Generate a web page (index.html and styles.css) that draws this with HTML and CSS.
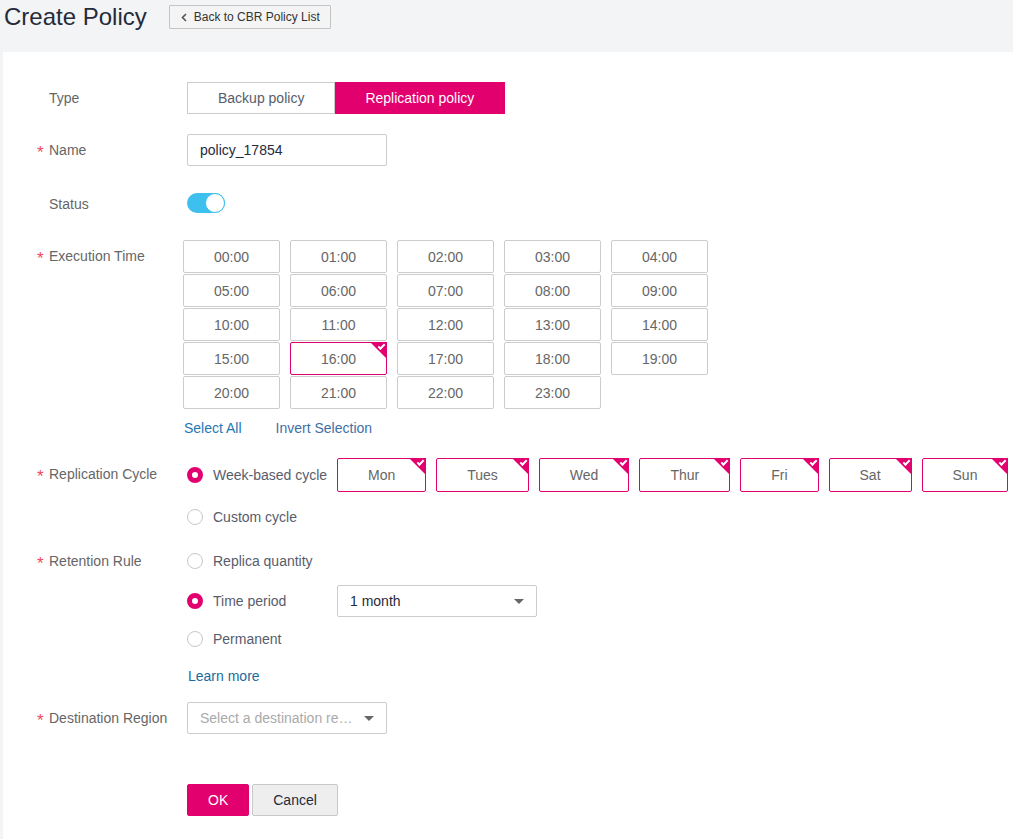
FILE: index.html
```html
<!DOCTYPE html>
<html lang="en">
<head>
<meta charset="utf-8">
<title>Create Policy</title>
<link rel="stylesheet" href="styles.css">
</head>
<body>
<div class="page-head">
  <h1 class="title">Create Policy</h1>
  <button class="back-btn" type="button">
    <svg class="back-icon" width="6" height="9" viewBox="0 0 6 9"><path d="M5 1 L1.5 4.5 L5 8" fill="none" stroke="#555" stroke-width="1.6"/></svg>
    Back to CBR Policy List
  </button>
</div>

<div class="card">
  <div class="row row-type">
    <div class="label"><span class="req"></span>Type</div>
    <div class="control">
      <div class="seg">
        <span class="seg-btn">Backup policy</span>
        <span class="seg-btn seg-on">Replication policy</span>
      </div>
    </div>
  </div>

  <div class="row">
    <div class="label"><span class="req">*</span>Name</div>
    <div class="control">
      <div class="input">policy_17854</div>
    </div>
  </div>

  <div class="row row-status">
    <div class="label label-status"><span class="req"></span>Status</div>
    <div class="control control-mid">
      <span class="toggle"><span class="knob"></span></span>
    </div>
  </div>

  <div class="row row-exec">
    <div class="label"><span class="req">*</span>Execution Time</div>
    <div class="control">
      <div class="time-grid">
        <span class="cell">00:00</span><span class="cell">01:00</span><span class="cell">02:00</span><span class="cell">03:00</span><span class="cell">04:00</span>
        <span class="cell">05:00</span><span class="cell">06:00</span><span class="cell">07:00</span><span class="cell">08:00</span><span class="cell">09:00</span>
        <span class="cell">10:00</span><span class="cell">11:00</span><span class="cell">12:00</span><span class="cell">13:00</span><span class="cell">14:00</span>
        <span class="cell">15:00</span><span class="cell checked">16:00</span><span class="cell">17:00</span><span class="cell">18:00</span><span class="cell">19:00</span>
        <span class="cell">20:00</span><span class="cell">21:00</span><span class="cell">22:00</span><span class="cell">23:00</span>
      </div>
      <div class="grid-links">
        <a class="link-select">Select All</a>
        <a class="link-invert">Invert Selection</a>
      </div>
    </div>
  </div>

  <div class="row row-cycle">
    <div class="label"><span class="req">*</span>Replication Cycle</div>
    <div class="control">
      <div class="opt opt-tall">
        <span class="opt-main"><span class="radio radio-on"></span>Week-based cycle</span>
        <div class="days">
          <span class="day checked">Mon</span>
          <span class="day checked">Tues</span>
          <span class="day checked">Wed</span>
          <span class="day checked">Thur</span>
          <span class="day checked">Fri</span>
          <span class="day checked">Sat</span>
          <span class="day checked">Sun</span>
        </div>
      </div>
      <div class="opt opt-custom">
        <span class="opt-main"><span class="radio"></span>Custom cycle</span>
      </div>
    </div>
  </div>

  <div class="row row-retention">
    <div class="label"><span class="req">*</span>Retention Rule</div>
    <div class="control">
      <div class="opt">
        <span class="opt-main"><span class="radio"></span>Replica quantity</span>
      </div>
      <div class="opt opt-time">
        <span class="opt-main"><span class="radio radio-on"></span>Time period</span>
        <div class="select select-period"><span class="select-text">1 month</span><span class="caret"></span></div>
      </div>
      <div class="opt opt-perm">
        <span class="opt-main"><span class="radio"></span>Permanent</span>
      </div>
      <a class="learn">Learn more</a>
    </div>
  </div>

  <div class="row row-dest">
    <div class="label"><span class="req">*</span>Destination Region</div>
    <div class="control">
      <div class="select select-dest"><span class="select-text placeholder">Select a destination region</span><span class="caret"></span></div>
    </div>
  </div>

  <div class="actions">
    <button class="btn btn-ok" type="button">OK</button>
    <button class="btn btn-cancel" type="button">Cancel</button>
  </div>
</div>
</body>
</html>
```

FILE: styles.css
```css
* { box-sizing: border-box; }

html, body {
  margin: 0;
  padding: 0;
  background: #f3f4f6;
  font-family: "Liberation Sans", Arial, sans-serif;
  font-size: 14px;
  color: #666;
}

.page-head {
  display: flex;
  align-items: center;
  height: 34px;
  padding: 0 4px;
  gap: 22px;
  margin-bottom: 18px;
}

.title {
  margin: 0;
  font-size: 24px;
  font-weight: normal;
  color: #252b3a;
  line-height: 28px;
}

.back-btn {
  display: flex;
  align-items: center;
  gap: 7px;
  height: 24px;
  padding: 0 10px 0 11px;
  border: 1px solid #c4c4c4;
  background: #f4f4f4;
  border-radius: 1px;
  font-family: "Liberation Sans", Arial, sans-serif;
  font-size: 12px;
  color: #333;
}

.card {
  margin-left: 3px;
  background: #fff;
  min-height: calc(100vh - 52px);
  padding: 30px 0 30px 34px;
}

.row {
  display: flex;
  align-items: flex-start;
  margin-bottom: 20px;
}

.label {
  width: 150px;
  height: 32px;
  flex: none;
  line-height: 32px;
  color: #666;
  white-space: nowrap;
}
.label-status { position: relative; top: 2px; }

.req {
  display: inline-block;
  width: 12px;
  height: 32px;
  color: #f0475e;
  font-size: 17px;
  position: relative;
  top: 3px;
  vertical-align: top;
  line-height: 32px;
}

.control { flex: 1; min-width: 0; }
.control-mid { height: 32px; display: flex; align-items: center; padding-top: 2px; }

/* segmented type */
.seg { display: flex; }
.seg-btn {
  height: 32px;
  line-height: 30px;
  padding: 0 30px;
  border: 1px solid #ccc;
  color: #575d6c;
  background: #fff;
}
.seg-btn + .seg-btn { border-left: none; }
.seg-on {
  background: #e2006f;
  border-color: #e2006f;
  color: #fff;
}

.input {
  width: 200px;
  height: 32px;
  line-height: 30px;
  border: 1px solid #ccc;
  border-radius: 2px;
  padding-left: 12px;
  color: #252b3a;
}

/* toggle */
.toggle {
  position: relative;
  display: inline-block;
  width: 38px;
  height: 20px;
  border-radius: 10px;
  background: #3ec0ef;
}
.knob {
  position: absolute;
  top: 0;
  right: 0;
  width: 20px;
  height: 20px;
  border-radius: 50%;
  background: #fff;
  border: 1px solid #3ec0ef;
}

.row-status { margin-bottom: 22px; }

/* time grid */
.time-grid {
  margin-left: -4px;
  display: grid;
  grid-template-columns: repeat(5, 97px);
  grid-auto-rows: 33px;
  column-gap: 10px;
  row-gap: 1px;
}
.cell {
  position: relative;
  border: 1px solid #ccc;
  border-radius: 2px;
  text-align: center;
  line-height: 31px;
  padding-top: 1px;
  color: #666;
}

.checked { border-color: #e2006f !important; }
.checked::before {
  content: "";
  position: absolute;
  top: -1px;
  right: -1px;
  width: 0;
  height: 0;
  border-top: 17px solid #e2006f;
  border-left: 17px solid transparent;
}
.checked::after {
  content: "";
  position: absolute;
  top: 1px;
  right: 1px;
  border-left: 2px solid #fff;
  border-bottom: 2px solid #fff;
  transform: rotate(-45deg);
  box-sizing: content-box;
  width: 5px;
  height: 2px;
}

.grid-links {
  display: flex;
  gap: 34px;
  margin-top: 9px;
  margin-left: -3px;
  line-height: 20px;
}
.link-select { color: #2677b4; }
.link-invert { color: #3f6fa6; }

/* options */
.opt {
  display: flex;
  align-items: center;
  height: 32px;
  color: #575d6c;
}
.opt-tall { height: 34px; }
.opt-custom { margin-top: 9px; }
.opt-time { margin-top: 8px; }
.opt-perm { margin-top: 6px; }

.opt-main {
  display: flex;
  align-items: center;
  gap: 10px;
  width: 150px;
  flex: none;
  white-space: nowrap;
}

.radio {
  width: 16px;
  height: 16px;
  border-radius: 50%;
  border: 1px solid #c8c8c8;
  background: #fff;
  flex: none;
}
.radio-on {
  border: 5px solid #e2006f;
}

.days { display: flex; gap: 10px; }
.day {
  position: relative;
  height: 34px;
  line-height: 32px;
  padding: 0 30px;
  border: 1px solid #e2006f;
  border-radius: 2px;
  color: #666;
  white-space: nowrap;
}

.row-cycle { margin-bottom: 12px; }

.select {
  position: relative;
  width: 200px;
  height: 32px;
  border: 1px solid #ccc;
  border-radius: 2px;
  padding: 0 36px 0 12px;
  line-height: 30px;
  color: #252b3a;
}
.select-dest { padding-right: 30px; }
.select-text {
  display: block;
  white-space: nowrap;
  overflow: hidden;
  text-overflow: ellipsis;
}
.placeholder { color: #aaa; }
.caret {
  position: absolute;
  right: 12px;
  top: 13px;
  width: 0;
  height: 0;
  border-left: 5px solid transparent;
  border-right: 5px solid transparent;
  border-top: 5px solid #666;
}

.learn {
  display: block;
  margin-top: 11px;
  line-height: 20px;
  color: #1b6c9c;
  padding-left: 1px;
}

.row-retention { margin-bottom: 16px; }
.row-dest { margin-bottom: 50px; }

.actions {
  display: flex;
  gap: 3px;
  padding-left: 150px;
}
.btn {
  height: 32px;
  padding: 0 20px;
  border-radius: 2px;
  font-family: "Liberation Sans", Arial, sans-serif;
  font-size: 14px;
}
.btn-ok {
  background: #e2006f;
  border: 1px solid #e2006f;
  color: #fff;
}
.btn-cancel {
  background: #eee;
  border: 1px solid #c8c8c8;
  color: #252b3a;
}
```
